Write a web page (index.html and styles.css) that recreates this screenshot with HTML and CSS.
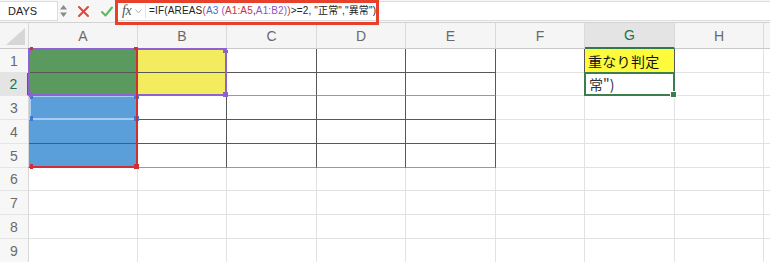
FILE: index.html
```html
<!DOCTYPE html>
<html lang="ja">
<head>
<meta charset="utf-8">
<title>Excel AREAS</title>
<link rel="stylesheet" href="styles.css">
</head>
<body>
<div class="app">
  <div class="toolbar">
    <div class="namebox">DAYS</div>
    <div class="spin">
      <svg width="7" height="14" viewBox="0 0 7 14"><path d="M0 5.5 L3.5 1 L7 5.5 Z M0 8.5 L3.5 13 L7 8.5 Z" fill="#8a8a8a"/></svg>
    </div>
    <div class="btn cancel">
      <svg width="11" height="11" viewBox="0 0 11 11"><path d="M1 1 L10 10 M10 1 L1 10" stroke="#e2463c" stroke-width="2" stroke-linecap="round"/></svg>
    </div>
    <div class="btn ok">
      <svg width="12" height="11" viewBox="0 0 12 11"><path d="M1 6 L4.5 9.5 L11 1.5" fill="none" stroke="#5cb85c" stroke-width="2" stroke-linecap="round" stroke-linejoin="round"/></svg>
    </div>
    <div class="fbar">
      <span class="fx">fx</span>
      <svg class="chev" width="7" height="5" viewBox="0 0 7 5"><path d="M0.5 0.5 L3.5 4 L6.5 0.5" fill="none" stroke="#b5b5b5" stroke-width="1"/></svg>
      <span class="sep"></span>
      <span class="formula">=IF(AREAS<span class="cr">(</span><span class="cb">A3</span> <span class="cp">(</span><span class="cr">A1:A5</span>,<span class="cp">A1:B2</span><span class="cp">)</span><span class="cr">)</span>&gt;=2, "正常","異常")<span class="caret"></span></span>
    </div>
    <div class="annot"></div>
  </div>

  <div class="sheet">
    <div class="corner"><span class="tri"></span></div>
    <div class="ch">A</div><div class="ch">B</div><div class="ch">C</div><div class="ch">D</div><div class="ch">E</div><div class="ch">F</div><div class="ch sel">G</div><div class="ch">H</div><div class="ch end"></div>

    <div class="rh">1</div>
    <div class="c d fg"></div><div class="c d fy"></div><div class="c d"></div><div class="c d"></div><div class="c d"></div><div class="c dr"></div><div class="c d gy">重なり判定</div><div class="c"></div><div class="c end"></div>

    <div class="rh sel">2</div>
    <div class="c d fg"></div><div class="c d fy"></div><div class="c d g2"></div><div class="c d g2"></div><div class="c d g2"></div><div class="c"></div><div class="c txt">常")</div><div class="c"></div><div class="c end"></div>

    <div class="rh">3</div>
    <div class="c d fb"></div><div class="c d"></div><div class="c d"></div><div class="c d"></div><div class="c d"></div><div class="c"></div><div class="c"></div><div class="c"></div><div class="c end"></div>

    <div class="rh">4</div>
    <div class="c d fb"></div><div class="c d"></div><div class="c d"></div><div class="c d"></div><div class="c d"></div><div class="c"></div><div class="c"></div><div class="c"></div><div class="c end"></div>

    <div class="rh">5</div>
    <div class="c d fb"></div><div class="c d g2"></div><div class="c d g2"></div><div class="c d g2"></div><div class="c d g2"></div><div class="c"></div><div class="c"></div><div class="c"></div><div class="c end"></div>

    <div class="rh">6</div>
    <div class="c"></div><div class="c"></div><div class="c"></div><div class="c"></div><div class="c"></div><div class="c"></div><div class="c"></div><div class="c"></div><div class="c end"></div>

    <div class="rh">7</div>
    <div class="c"></div><div class="c"></div><div class="c"></div><div class="c"></div><div class="c"></div><div class="c"></div><div class="c"></div><div class="c"></div><div class="c end"></div>

    <div class="rh">8</div>
    <div class="c"></div><div class="c"></div><div class="c"></div><div class="c"></div><div class="c"></div><div class="c"></div><div class="c"></div><div class="c"></div><div class="c end"></div>

    <div class="rh">9</div>
    <div class="c"></div><div class="c"></div><div class="c"></div><div class="c"></div><div class="c"></div><div class="c"></div><div class="c"></div><div class="c"></div><div class="c end"></div>

    <div class="hl hl-blue"><span class="h h-tr"></span><span class="h h-br"></span><span class="h h-tl"></span><span class="h h-bl"></span></div>
    <div class="hl hl-purple"><span class="h h-tr top"></span><span class="h h-br"></span><span class="h h-tl top"></span><span class="h h-bl"></span></div>
    <div class="hl hl-red"><span class="h h-tr top"></span><span class="h h-br"></span><span class="h h-tl top"></span><span class="h h-bl"></span></div>
    <div class="active"><span class="fill-handle"></span></div>
  </div>
</div>
</body>
</html>
```

FILE: styles.css
```css
html, body {
  margin: 0;
  padding: 0;
  background: #ffffff;
}

.app {
  width: 770px;
  height: 262px;
  overflow: hidden;
  font-family: "Liberation Sans", "Noto Sans CJK JP", sans-serif;
}

/* ---------- toolbar / formula bar ---------- */
.toolbar {
  position: relative;
  z-index: 5;
  display: flex;
  align-items: center;
  height: 22px;
  background: #f6f6f6;
  border-bottom: 1px solid #d2d2d2;
}

.namebox {
  box-sizing: border-box;
  width: 58px;
  height: 20px;
  background: #ffffff;
  border: 1px solid #dcdcdc;
  border-left: none;
  padding-left: 8px;
  font-size: 11px;
  line-height: 18px;
  color: #222;
}

.spin {
  width: 8px;
  display: flex;
  justify-content: center;
  margin-left: 1px;
}

.btn {
  display: flex;
  align-items: center;
  justify-content: center;
}
.cancel { margin-left: 11px; width: 11px; }
.ok { margin-left: 12px; width: 12px; }

.fbar {
  flex: 1;
  margin-left: 4px;
  height: 20px;
  box-sizing: border-box;
  background: #ffffff;
  border-top: 1px solid #dcdcdc;
  border-bottom: 1px solid #dcdcdc;
  display: flex;
  align-items: center;
}

.fx {
  margin-left: 5px;
  font-family: "Liberation Serif", "DejaVu Serif", serif;
  font-style: italic;
  font-size: 14px;
  color: #555;
  letter-spacing: -0.5px;
}

.chev { margin-left: 4px; margin-top: 1px; }

.sep {
  width: 1px;
  height: 14px;
  background: #e4e4e4;
  margin-left: 3px;
}

.formula {
  margin-left: 3px;
  font-size: 10px;
  letter-spacing: 0.15px;
  line-height: 14px;
  color: #222;
  white-space: pre;
}

.cb { color: #3b6fd6; }
.cr { color: #cc2f3a; }
.cp { color: #8a55c9; }

.caret {
  display: inline-block;
  width: 1px;
  height: 13px;
  background: #222;
  margin-left: 1px;
  vertical-align: -3px;
}

.annot {
  position: absolute;
  left: 115px;
  top: 0;
  width: 264px;
  height: 25px;
  box-sizing: border-box;
  border: 3px solid #e8412b;
}

/* ---------- sheet grid ---------- */
.sheet {
  position: relative;
  display: grid;
  grid-template-columns: 29px 109px 89px 90px 89px 90px 89px 90px 89px 1fr;
  grid-template-rows: 26px 24px 23px 24px 24px 24px 23px 24px 24px 24px;
  font-family: "Liberation Sans", "Noto Sans CJK JP", sans-serif;
}

.sheet > div {
  box-sizing: border-box;
}

.corner {
  position: relative;
  background: #f5f5f5;
  border-right: 1px solid #d8d8d8;
  border-bottom: 1px solid #c9c9c9;
}
.tri {
  position: absolute;
  right: 3px;
  bottom: 3px;
  width: 0;
  height: 0;
  border-left: 19px solid transparent;
  border-bottom: 17px solid #d6d6d6;
}

.ch {
  background: #f5f5f5;
  border-right: 1px solid #dadada;
  border-bottom: 1px solid #c9c9c9;
  display: flex;
  align-items: center;
  justify-content: center;
  font-size: 14px;
  color: #6a6a6a;
}
.ch.sel {
  background: #e4e4e4;
  color: #1f7246;
  border-bottom: 2px solid #2f7a4d;
}
.ch.end { border-right: none; }

.rh {
  background: #f7f7f7;
  border-right: 1px solid #d8d8d8;
  border-bottom: 1px solid #e4e4e4;
  display: flex;
  align-items: center;
  justify-content: center;
  font-size: 14px;
  color: #6a6a6a;
}
.rh.sel {
  background: #e4e4e4;
  color: #1f7246;
  border-right: 2px solid #2f7a4d;
}

.c {
  border-right: 1px solid #e2e2e2;
  border-bottom: 1px solid #e2e2e2;
}
.c.end { border-right: none; }

.c.d {
  border-right-color: #585858;
  border-bottom-color: #585858;
}
.c.d.g2 { border-bottom-color: #9a9a9a; }
.c.dr { border-right-color: #585858; }

.fg { background: #5a9a5e; }
.fy { background: #f3ec5e; }
.fb { background: #5b9fda; }

.gy {
  background: #fdfb3c;
  font-family: "Noto Sans CJK JP", sans-serif;
  font-size: 14px;
  color: #111;
  padding-left: 3px;
  display: flex;
  align-items: center;
  letter-spacing: 0.3px;
}

.txt {
  font-family: "Noto Sans CJK JP", sans-serif;
  font-size: 14px;
  color: #333;
  padding-left: 4px;
  display: flex;
  align-items: center;
}

/* ---------- reference highlights (overlays) ---------- */
.hl {
  position: absolute;
  box-sizing: border-box;
  pointer-events: none;
}
.hl-purple {
  grid-column: 2 / 4;
  grid-row: 2 / 4;
  top: -1px; left: -1px; right: 0; bottom: 0;
  border: 2px solid #8c63d0;
  z-index: 3;
}
.hl-red {
  grid-column: 2 / 3;
  grid-row: 2 / 7;
  top: -1px; left: -1px; right: 0; bottom: 0;
  border: 2px solid #cf3035;
  border-top: none;
  border-left-color: transparent;
  z-index: 4;
}
.hl-blue {
  grid-column: 2 / 3;
  grid-row: 4 / 5;
  top: -1px; left: 0; right: 0; bottom: 0;
  border: 2px solid #a9cdf0;
  z-index: 2;
}

.h {
  position: absolute;
  width: 5px;
  height: 5px;
}
.hl-blue .h { background: #3d79d6; }
.hl-purple .h { background: #8c63d0; }
.hl-red .h { background: #cf3035; }

.h-tr { right: -3px; top: -3px; }
.h-br { right: -3px; bottom: -3px; }
.h-tl { left: -1px; top: -3px; width: 3px; }
.h-bl { left: -1px; bottom: -3px; width: 3px; }
.h.top { top: 0; height: 3px; }
.hl-red .h-tr { top: -1px; right: -2px; width: 4px; }
.hl-red .h-tl { top: -1px; left: 0; }
.hl-red .h-bl { left: 0; }

.active {
  position: absolute;
  grid-column: 8 / 9;
  grid-row: 3 / 4;
  top: -1px; left: -1px; right: 0; bottom: 0;
  border: 2px solid #3c7d50;
  z-index: 4;
}
.fill-handle {
  position: absolute;
  right: -4px;
  bottom: -4px;
  width: 5px;
  height: 5px;
  background: #3c7d50;
  border: 1px solid #ffffff;
  box-sizing: content-box;
}
```
